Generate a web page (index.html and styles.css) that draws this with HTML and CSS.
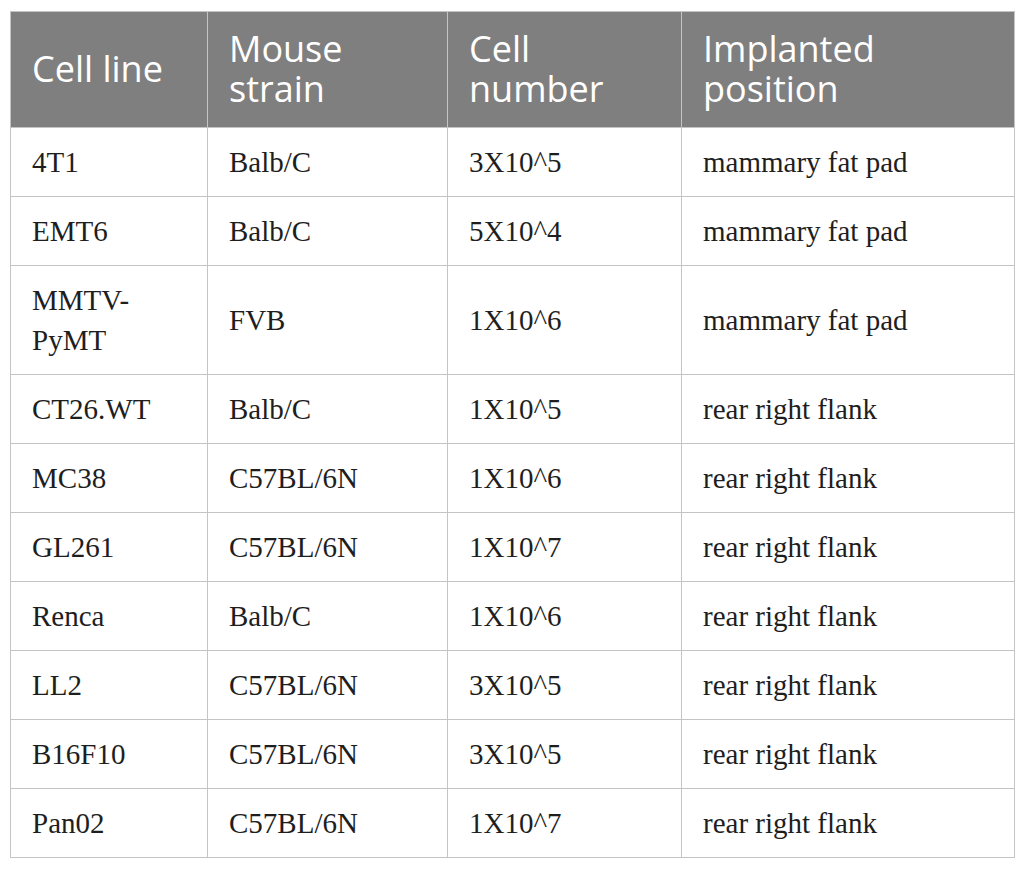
FILE: index.html
```html
<!DOCTYPE html>
<html>
<head>
<meta charset="utf-8">
<link rel="stylesheet" href="styles.css">
</head>
<body>
<table class="data">
  <colgroup>
    <col class="c1"><col class="c2"><col class="c3"><col class="c4">
  </colgroup>
  <thead>
    <tr><th>Cell line</th><th>Mouse<br>strain</th><th>Cell<br>number</th><th>Implanted<br>position</th></tr>
  </thead>
  <tbody>
    <tr><td>4T1</td><td>Balb/C</td><td>3X10^5</td><td>mammary fat pad</td></tr>
    <tr><td>EMT6</td><td>Balb/C</td><td>5X10^4</td><td>mammary fat pad</td></tr>
    <tr><td>MMTV-<br>PyMT</td><td>FVB</td><td>1X10^6</td><td>mammary fat pad</td></tr>
    <tr><td>CT26.WT</td><td>Balb/C</td><td>1X10^5</td><td>rear right flank</td></tr>
    <tr><td>MC38</td><td>C57BL/6N</td><td>1X10^6</td><td>rear right flank</td></tr>
    <tr><td>GL261</td><td>C57BL/6N</td><td>1X10^7</td><td>rear right flank</td></tr>
    <tr><td>Renca</td><td>Balb/C</td><td>1X10^6</td><td>rear right flank</td></tr>
    <tr><td>LL2</td><td>C57BL/6N</td><td>3X10^5</td><td>rear right flank</td></tr>
    <tr><td>B16F10</td><td>C57BL/6N</td><td>3X10^5</td><td>rear right flank</td></tr>
    <tr><td>Pan02</td><td>C57BL/6N</td><td>1X10^7</td><td>rear right flank</td></tr>
  </tbody>
</table>
</body>
</html>
```
FILE: styles.css
```css
html, body {
  margin: 0;
  padding: 0;
  background: #ffffff;
}
body {
  padding: 11px 10px 0 10px;
}
.data {
  border-collapse: collapse;
  table-layout: fixed;
  width: 1004px;
}
.c1 { width: 197px; }
.c2 { width: 240px; }
.c3 { width: 234px; }
.c4 { width: 333px; }
.data th {
  background: #7f7f7f;
  color: #ffffff;
  font-family: "Open Sans", sans-serif;
  font-weight: 400;
  font-size: 36px;
  line-height: 40px;
  text-align: left;
  vertical-align: middle;
  padding: 17px 18px 18px 21px;
  border: 1px solid #c4c4c4;
}
.data th + th {
  border-left: 1px solid #a6a6a6;
}
.data td {
  font-family: "Liberation Serif", "Times New Roman", serif;
  font-size: 29px;
  line-height: 40px;
  color: #1e1e1e;
  text-align: left;
  vertical-align: middle;
  padding: 14px 20px 14px 21px;
  border: 1px solid #c4c4c4;
}
```
